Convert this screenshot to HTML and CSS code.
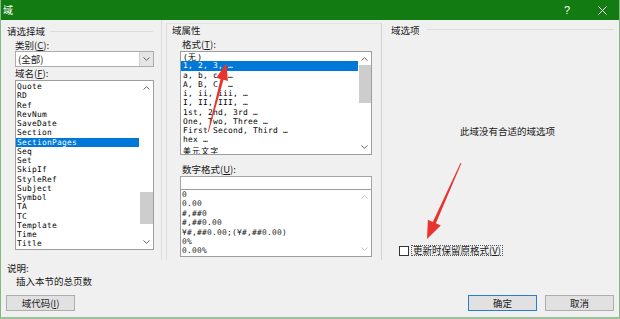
FILE: index.html
```html
<!DOCTYPE html>
<html lang="zh-CN">
<head>
<meta charset="utf-8">
<title>域</title>
<link rel="stylesheet" href="styles.css">
</head>
<body>
<div class="dialog">
  <div class="titlebar">
    <span class="title">域</span>
    <span class="tb-btns">
      <span class="help">?</span>
      <span class="close"><svg width="9" height="9" viewBox="0 0 9 9"><path d="M0.5 0.5 L8.5 8.5 M8.5 0.5 L0.5 8.5" stroke="#fff" stroke-width="1"/></svg></span>
    </span>
  </div>

  <div class="main">
    <div class="col col-left">
      <div class="group-head"><span>请选择域</span><i class="rule"></i></div>
      <div class="label first">类别(<u>C</u>):</div>
      <div class="combo">
        <span class="combo-text">(全部)</span>
        <span class="combo-btn"><svg width="7" height="4" viewBox="0 0 7 4"><path d="M0.5 0.5 L3.5 3.3 L6.5 0.5" fill="none" stroke="#606060" stroke-width="1"/></svg></span>
      </div>
      <div class="label">域名(<u>F</u>):</div>
      <div class="list list-fields">
        <div class="items">
          <div class="item">Quote</div>
          <div class="item">RD</div>
          <div class="item">Ref</div>
          <div class="item">RevNum</div>
          <div class="item">SaveDate</div>
          <div class="item">Section</div>
          <div class="item sel">SectionPages</div>
          <div class="item">Seq</div>
          <div class="item">Set</div>
          <div class="item">SkipIf</div>
          <div class="item">StyleRef</div>
          <div class="item">Subject</div>
          <div class="item">Symbol</div>
          <div class="item">TA</div>
          <div class="item">TC</div>
          <div class="item">Template</div>
          <div class="item">Time</div>
          <div class="item">Title</div>
        </div>
        <div class="vscroll">
          <span class="arrow"><svg width="7" height="4" viewBox="0 0 7 4"><path d="M0.5 3.5 L3.5 0.7 L6.5 3.5" fill="none" stroke="#606060" stroke-width="1"/></svg></span>
          <span class="track"><i class="thumb thumb-fields"></i></span>
          <span class="arrow"><svg width="7" height="4" viewBox="0 0 7 4"><path d="M0.5 0.5 L3.5 3.3 L6.5 0.5" fill="none" stroke="#606060" stroke-width="1"/></svg></span>
        </div>
      </div>
    </div>

    <div class="col col-mid">
      <div class="group-mid">
        <div class="group-head plain"><span>域属性</span></div>
        <div class="label sub fmtlabel">格式(<u>T</u>):</div>
        <div class="list list-format">
          <div class="items">
            <div class="item">(<span class="cjk">无</span>)</div>
            <div class="item sel">1, 2, 3, …</div>
            <div class="item">a, b, c, …</div>
            <div class="item">A, B, C, …</div>
            <div class="item">i, ii, iii, …</div>
            <div class="item">I, II, III, …</div>
            <div class="item">1st, 2nd, 3rd …</div>
            <div class="item">One, Two, Three …</div>
            <div class="item">First Second, Third …</div>
            <div class="item">hex …</div>
            <div class="item last-cjk"><span class="cjk">美元文字</span></div>
          </div>
          <div class="vscroll narrow">
            <span class="arrow"><svg width="7" height="4" viewBox="0 0 7 4"><path d="M0.5 3.5 L3.5 0.7 L6.5 3.5" fill="none" stroke="#606060" stroke-width="1"/></svg></span>
            <span class="track"><i class="thumb thumb-format"></i></span>
            <span class="arrow"><svg width="7" height="4" viewBox="0 0 7 4"><path d="M0.5 0.5 L3.5 3.3 L6.5 0.5" fill="none" stroke="#606060" stroke-width="1"/></svg></span>
          </div>
        </div>
        <div class="label sub numlabel">数字格式(<u>U</u>):</div>
        <div class="textbox"></div>
        <div class="list list-number">
          <div class="items">
            <div class="item">0</div>
            <div class="item">0.00</div>
            <div class="item">#,##0</div>
            <div class="item">#,##0.00</div>
            <div class="item">¥#,##0.00;(¥#,##0.00)</div>
            <div class="item">0%</div>
            <div class="item">0.00%</div>
          </div>
          <div class="vscroll narrow disabled">
            <span class="arrow"><svg width="7" height="4" viewBox="0 0 7 4"><path d="M0.5 3.5 L3.5 0.7 L6.5 3.5" fill="none" stroke="#c4c4c4" stroke-width="1"/></svg></span>
            <span class="track"></span>
            <span class="arrow"><svg width="7" height="4" viewBox="0 0 7 4"><path d="M0.5 0.5 L3.5 3.3 L6.5 0.5" fill="none" stroke="#c4c4c4" stroke-width="1"/></svg></span>
          </div>
        </div>
      </div>
    </div>

    <div class="col col-right">
      <div class="group-head right-head"><span>域选项</span><i class="rule"></i></div>
      <div class="message">此域没有合适的域选项</div>
      <div class="check-row">
        <span class="checkbox"></span>
        <span class="check-label">更新时保留原格式(<u>V</u>)</span>
      </div>
    </div>
  </div>

  <div class="footer">
    <div class="desc">
      <div class="desc-title">说明:</div>
      <div class="desc-text">插入本节的总页数</div>
      <div class="btn btn-code">域代码(<u>I</u>)</div>
    </div>
    <div class="actions">
      <div class="btn btn-primary">确定</div>
      <div class="btn">取消</div>
    </div>
  </div>

  <svg class="annotations" width="620" height="319" viewBox="0 0 620 319">
    <polygon points="207.8,131.9 220.6,79.0 216.3,77.8 226.5,63 227.9,81.0 223.5,79.8 208.6,132.1" fill="#e8342c"/>
    <polygon points="460.6,162.8 432.8,221.9 427.9,219.7 427,239 440.7,225.5 435.9,223.3 461.4,163.2" fill="#e8342c"/>
  </svg>
</div>
</body>
</html>
```

FILE: styles.css
```css
* {
  box-sizing: border-box;
  margin: 0;
  padding: 0;
}

html, body {
  width: 620px;
  height: 319px;
  overflow: hidden;
}

body {
  background: #f0f0f0;
  font-family: "Noto Sans CJK SC", "Liberation Sans", sans-serif;
  font-size: 9.5px;
  color: #1a1a1a;
}

u {
  text-decoration: underline;
  text-underline-offset: 1px;
}

.dialog {
  position: relative;
  width: 620px;
  height: 319px;
  display: flex;
  flex-direction: column;
  border-left: 1px solid #86b886;
  border-right: 1px solid #86b886;
  border-bottom: 2px solid #9cc29c;
}

/* title bar */
.titlebar {
  flex: none;
  height: 20px;
  background: #127c12;
  color: #fff;
  display: flex;
  align-items: center;
  padding-left: 2px;
}

.title {
  font-size: 10px;
  line-height: 12px;
}

.tb-btns {
  margin-left: auto;
  display: flex;
  align-items: center;
  margin-right: 10px;
}

.help {
  width: 12px;
  text-align: center;
  font-family: "Liberation Sans", sans-serif;
  font-size: 11px;
  line-height: 12px;
}

.close {
  width: 14px;
  margin-left: 22px;
  display: flex;
  justify-content: center;
}

/* main columns */
.main {
  flex: none;
  height: 240px;
  display: flex;
}

.col-left {
  width: 161px;
  border-right: 1px solid #dcdcdc;
  padding-top: 5px;
}

.col-mid {
  width: 219px;
  padding: 3px 0 0 4px;
}

.group-mid {
  height: 100%;
  border-left: 1px solid #dcdcdc;
  border-top: 1px solid #e3e3e3;
  padding-left: 5px;
}

.col-right {
  width: 238px;
  margin-top: 3px;
  height: 237px;
  border-left: 1px solid #d2d2d2;
  padding-top: 1px;
}

.group-head {
  display: flex;
  align-items: center;
  height: 12px;
  line-height: 12px;
  padding-left: 6px;
  padding-right: 8px;
  white-space: nowrap;
}

.group-head.plain {
  padding-left: 0;
}

.right-head {
  padding-left: 9px;
  padding-right: 5px;
}

.rule {
  flex: 1;
  height: 1px;
  background: #dcdcdc;
  margin-left: 5px;
}

.right-head .rule {
  margin-left: 7px;
  margin-top: -2px;
}

.label {
  height: 12px;
  line-height: 12px;
  padding-left: 14px;
  white-space: nowrap;
}

.label.first {
  margin-top: 2px;
}

.label.sub {
  padding-left: 10px;
}

.fmtlabel {
  margin-top: 2px;
}

.numlabel {
  margin-top: 8px;
}

/* combo box */
.combo {
  margin-left: 14px;
  width: 139px;
  height: 16px;
  border: 1px solid #acacac;
  background: #fff;
  display: flex;
}

.combo-text {
  padding-left: 2px;
  line-height: 14px;
}

.combo-btn {
  margin-left: auto;
  width: 14px;
  background: #e5e5e5;
  border-left: 1px solid #cfcfcf;
  display: flex;
  align-items: center;
  justify-content: center;
}

/* list boxes */
.list {
  display: flex;
  border: 1px solid #9d9d9d;
  background: #fff;
  overflow: hidden;
}

.items {
  flex: 1;
  min-width: 0;
  font-family: "DejaVu Sans Mono", "Noto Sans CJK SC", monospace;
  font-size: 7.9px;
  letter-spacing: 0.25px;
  color: #000;
}

.item {
  height: 9.25px;
  line-height: 9.25px;
  padding-left: 1px;
  white-space: nowrap;
}

.cjk {
  font-family: "Noto Sans CJK SC", sans-serif;
  font-size: 7.8px;
  letter-spacing: 1.3px;
}

.last-cjk {
  margin-top: 1px;
}

.item.sel {
  background: #0078d7;
  color: #fff;
}

.list-fields {
  margin: 1px 0 0 14px;
  width: 139px;
  height: 170px;
}

.list-fields .items {
  padding-top: 1px;
}

.list-format {
  margin: 1px 0 0 8px;
  width: 192px;
  height: 104px;
}

.list-format .item {
  padding-left: 2px;
}

.list-number {
  margin: -1px 0 0 8px;
  width: 192px;
  height: 68px;
}

.list-number .item {
  height: 9.4px;
  line-height: 9.4px;
  padding-left: 1px;
  color: #222;
}

.textbox {
  margin: 1px 0 0 8px;
  width: 192px;
  height: 14px;
  border: 1px solid #a5a5a5;
  background: #fff;
}

/* scrollbars */
.vscroll {
  flex: none;
  width: 14px;
  display: flex;
  flex-direction: column;
}

.vscroll.narrow {
  width: 13px;
}

.arrow {
  flex: none;
  height: 14px;
  display: flex;
  align-items: center;
  justify-content: center;
}

.track {
  flex: 1;
  display: block;
}

.thumb {
  display: block;
  background: #cdcdcd;
  margin-left: 1px;
}

.thumb-fields {
  margin-top: 97px;
  height: 32px;
}

.thumb-format {
  margin-top: -1px;
  height: 38px;
}

/* right column */
.message {
  margin-top: 89px;
  margin-left: 78px;
  height: 12px;
  line-height: 12px;
  white-space: nowrap;
}

.check-row {
  margin-top: 108px;
  padding-left: 17px;
  display: flex;
  align-items: center;
}

.checkbox {
  width: 10px;
  height: 10px;
  border: 1px solid #333;
  background: #fff;
}

.check-label {
  margin-left: 2px;
  height: 11px;
  line-height: 9px;
  padding: 0 1px;
  border: 1px dotted #555;
  white-space: nowrap;
}

/* footer */
.footer {
  flex: 1;
  display: flex;
  justify-content: space-between;
  align-items: flex-end;
  padding-bottom: 6px;
}

.desc {
  padding-left: 5px;
}

.desc-title {
  margin-top: 1.5px;
  height: 12px;
  line-height: 12px;
  padding-left: 1px;
}

.desc-text {
  margin-top: 1.5px;
  height: 12px;
  line-height: 12px;
  padding-left: 10px;
}

.btn {
  width: 69px;
  height: 16px;
  border: 1px solid #adadad;
  background: #e1e1e1;
  display: flex;
  align-items: center;
  justify-content: center;
  line-height: 12px;
  white-space: nowrap;
}

.btn-code {
  margin-top: 8px;
}

.btn-primary {
  border-color: #2a7bd4;
}

.actions {
  display: flex;
  gap: 8px;
  padding-right: 5px;
}

/* red annotation arrows drawn over the dialog */
.annotations {
  position: absolute;
  left: -1px;
  top: 0;
  pointer-events: none;
}
```
